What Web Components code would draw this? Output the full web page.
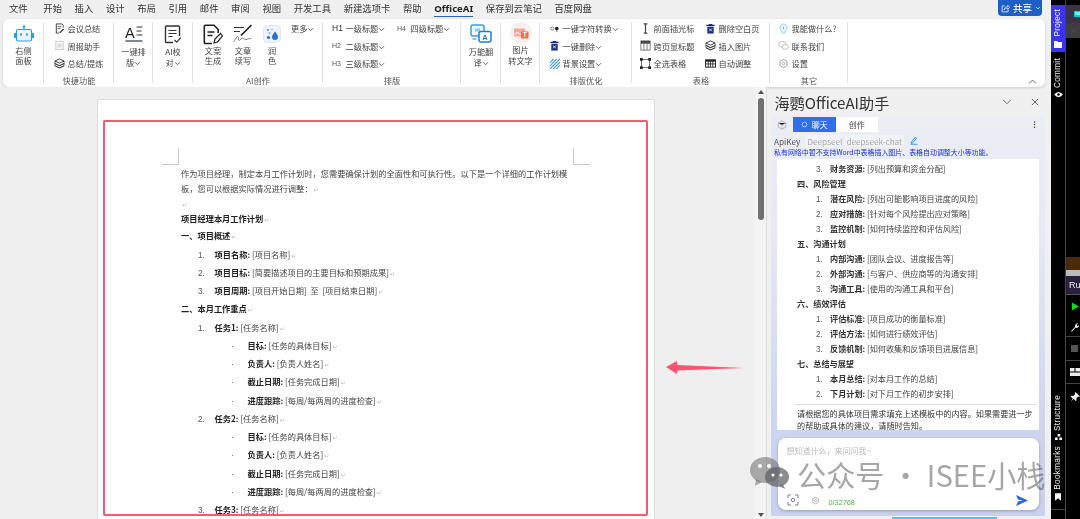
<!DOCTYPE html>
<html lang="zh"><head><meta charset="utf-8"><title>OfficeAI</title>
<style>
html,body{margin:0;padding:0;height:519px;overflow:hidden;background:#f0f0f0}
body{font-family:"Noto Sans CJK SC","Liberation Sans",sans-serif;color:#333}
</style></head><body>
<app-shell>
<menu-bar>
  <menu-item style="margin-right:3px">文件</menu-item><menu-item>开始</menu-item><menu-item>插入</menu-item><menu-item>设计</menu-item><menu-item>布局</menu-item><menu-item>引用</menu-item><menu-item>邮件</menu-item><menu-item>审阅</menu-item><menu-item>视图</menu-item><menu-item>开发工具</menu-item><menu-item>新建选项卡</menu-item><menu-item>帮助</menu-item><menu-item active>OfficeAI</menu-item><menu-item>保存到云笔记</menu-item><menu-item>百度网盘</menu-item>
  <share-btn slot="end">共享</share-btn>
</menu-bar>
<rb-ribbon>
  <rb-group style="width:41px"><rb-big icon="robot" w="22" h="18">右侧<br>面板</rb-big></rb-group>
  <rb-group label="快捷功能" style="width:70px"><rb-rows style="padding-left:10px">
    <rb-small icon="docpen">会议总结</rb-small><rb-small icon="faint">周报助手</rb-small><rb-small icon="layers">总结/提炼</rb-small>
  </rb-rows></rb-group>
  <rb-group style="width:39px"><rb-big icon="aline" w="18" h="18" style="--tm:2px">一键排<br>版<x-icon name="chev" w="7" h="5"></x-icon></rb-big></rb-group>
  <rb-group style="width:40px"><rb-big icon="doccheck" w="18" h="19" style="--tm:2px">AI校<br>对<x-icon name="chev" w="7" h="5"></x-icon></rb-big></rb-group>
  <rb-group label="AI创作" style="width:130px"><rb-cols style="padding-left:5px">
    <rb-big icon="docpenb" w="20" h="21" style="width:30px;flex:none">文案<br>生成</rb-big>
    <rb-big icon="squiggle" w="20" h="20" style="width:30px;flex:none">文章<br>续写</rb-big>
    <rb-big icon="polish" w="18" h="18" style="width:28px;flex:none">润<br>色</rb-big>
    <rb-small style="margin-left:5px">更多<x-icon name="chev" w="7" h="5"></x-icon></rb-small>
  </rb-cols></rb-group>
  <rb-group label="排版" style="width:138px"><rb-cols style="padding-left:9px">
    <rb-rows style="width:65px">
      <rb-small lead="H1" big>一级标题<x-icon name="chev" w="7" h="5"></x-icon></rb-small>
      <rb-small lead="H2">二级标题<x-icon name="chev" w="7" h="5"></x-icon></rb-small>
      <rb-small lead="H3">三级标题<x-icon name="chev" w="7" h="5"></x-icon></rb-small>
    </rb-rows>
    <rb-rows><rb-small lead="H4">四级标题<x-icon name="chev" w="7" h="5"></x-icon></rb-small></rb-rows>
  </rb-cols></rb-group>
  <rb-group style="width:40px"><rb-big icon="translate" w="22" h="20" style="--tm:2px">万能翻<br>译<x-icon name="chev" w="7" h="5"></x-icon></rb-big></rb-group>
  <rb-group style="width:39px"><rb-big icon="imgtext" w="22" h="22" style="--pt:4px;--tm:1px">图片<br>转文字</rb-big></rb-group>
  <rb-group label="排版优化" style="width:92px"><rb-rows style="padding-left:9px">
    <rb-small icon="dots">一键字符转换<x-icon name="chev" w="7" h="5"></x-icon></rb-small>
    <rb-small icon="trash">一键删除<x-icon name="chev" w="7" h="5"></x-icon></rb-small>
    <rb-small icon="stripes">背景设置<x-icon name="chev" w="7" h="5"></x-icon></rb-small>
  </rb-rows></rb-group>
  <rb-group label="表格" style="width:138px"><rb-cols style="padding-left:8px">
    <rb-rows style="width:65px">
      <rb-small icon="ibeam">前面插光标</rb-small><rb-small icon="tablehead">跨页显标题</rb-small><rb-small icon="select">全选表格</rb-small>
    </rb-rows>
    <rb-rows>
      <rb-small icon="trash">删除空白页</rb-small><rb-small icon="layers">插入图片</rb-small><rb-small icon="tabledark">自动调整</rb-small>
    </rb-rows>
  </rb-cols></rb-group>
  <rb-group label="其它" style="width:78px"><rb-rows style="padding-left:8px">
    <rb-small icon="bulb">我能做什么?</rb-small><rb-small icon="wechat">联系我们</rb-small><rb-small icon="gear">设置</rb-small>
  </rb-rows></rb-group>
  <x-icon slot="end" name="chevup" w="9" h="5"></x-icon>
</rb-ribbon>
<work-space>
  <doc-area>
    <doc-line tight nomark>作为项目经理，制定本月工作计划时，您需要确保计划的全面性和可执行性。以下是一个详细的工作计划模</doc-line>
    <doc-line tight>板，您可以根据实际情况进行调整：</doc-line>
    <doc-line tight></doc-line>
    <doc-line tight><b>项目经理本月工作计划</b></doc-line>
    <doc-line><b>一、项目概述</b></doc-line>
    <doc-line level="1" num="1."><b>项目名称:</b> [项目名称]</doc-line>
    <doc-line level="1" num="2."><b>项目目标:</b> [简要描述项目的主要目标和预期成果]</doc-line>
    <doc-line level="1" num="3."><b>项目周期:</b> [项目开始日期]&nbsp; 至&nbsp; [项目结束日期]</doc-line>
    <doc-line><b>二、本月工作重点</b></doc-line>
    <doc-line level="1" num="1."><b>任务1:</b> [任务名称]</doc-line>
    <doc-line level="2" num="·"><b>目标:</b> [任务的具体目标]</doc-line>
    <doc-line level="2" num="·"><b>负责人:</b> [负责人姓名]</doc-line>
    <doc-line level="2" num="·"><b>截止日期:</b> [任务完成日期]</doc-line>
    <doc-line level="2" num="·"><b>进度跟踪:</b> [每周/每两周的进度检查]</doc-line>
    <doc-line level="1" num="2."><b>任务2:</b> [任务名称]</doc-line>
    <doc-line level="2" num="·"><b>目标:</b> [任务的具体目标]</doc-line>
    <doc-line level="2" num="·"><b>负责人:</b> [负责人姓名]</doc-line>
    <doc-line level="2" num="·"><b>截止日期:</b> [任务完成日期]</doc-line>
    <doc-line level="2" num="·"><b>进度跟踪:</b> [每周/每两周的进度检查]</doc-line>
    <doc-line level="1" num="3."><b>任务3:</b> [任务名称]</doc-line>
  </doc-area>
  <doc-scroll></doc-scroll>
  <task-pane>
    <msg-line num="3."><b>财务资源:</b> [列出预算和资金分配]</msg-line>
    <msg-line head>四、风险管理</msg-line>
    <msg-line num="1."><b>潜在风险:</b> [列出可能影响项目进度的风险]</msg-line>
    <msg-line num="2."><b>应对措施:</b> [针对每个风险提出应对策略]</msg-line>
    <msg-line num="3."><b>监控机制:</b> [如何持续监控和评估风险]</msg-line>
    <msg-line head>五、沟通计划</msg-line>
    <msg-line num="1."><b>内部沟通:</b> [团队会议、进度报告等]</msg-line>
    <msg-line num="2."><b>外部沟通:</b> [与客户、供应商等的沟通安排]</msg-line>
    <msg-line num="3."><b>沟通工具:</b> [使用的沟通工具和平台]</msg-line>
    <msg-line head>六、绩效评估</msg-line>
    <msg-line num="1."><b>评估标准:</b> [项目成功的衡量标准]</msg-line>
    <msg-line num="2."><b>评估方法:</b> [如何进行绩效评估]</msg-line>
    <msg-line num="3."><b>反馈机制:</b> [如何收集和反馈项目进展信息]</msg-line>
    <msg-line head>七、总结与展望</msg-line>
    <msg-line num="1."><b>本月总结:</b> [对本月工作的总结]</msg-line>
    <msg-line num="2."><b>下月计划:</b> [对下月工作的初步安排]</msg-line>
    <msg-foot>请根据您的具体项目需求填充上述模板中的内容。如果需要进一步的帮助或具体的建议，请随时告知。</msg-foot>
  </task-pane>
</work-space>
<ide-strip></ide-strip>
<water-mark></water-mark>
</app-shell>
<script>
const ICONS={
robot:['0 0 22 18','<path d="M11 4V1.5" stroke="#2e9be6" stroke-width="1.3"/><circle cx="11" cy="1.5" r="1.2" fill="#2e9be6"/><rect x="3.5" y="4.5" width="15" height="11.5" rx="1.5" fill="#eaf5fd" stroke="#2e9be6" stroke-width="1.2"/><rect x="1" y="8" width="2" height="5" fill="#2e9be6"/><rect x="19" y="8" width="2" height="5" fill="#2e9be6"/><rect x="7" y="8.5" width="2" height="2" fill="#2e9be6"/><rect x="13" y="8.5" width="2" height="2" fill="#2e9be6"/>'],
docpen:['0 0 12 12','<path d="M2.5 11V1h6l1.5 1.5V5M2.5 11h3" fill="none" stroke="#333" stroke-width="1"/><path d="M4 4h4M4 6h3" stroke="#333" stroke-width=".8"/><path d="M6 10l4-4 1 1-4 4H6z" fill="#333"/>'],
faint:['0 0 12 12','<rect x="2" y="1.5" width="8" height="9" fill="#f6f6f6" stroke="#c8c8c8"/><rect x="4" y="4" width="4" height="4" fill="#d8d8d8"/>'],
layers:['0 0 12 12','<path d="M6 1l5 2.3L6 5.6 1 3.3z" fill="none" stroke="#333" stroke-width="1"/><path d="M1 6l5 2.3L11 6" fill="none" stroke="#333" stroke-width="1.1"/><path d="M1 8.4l5 2.4 5-2.4" fill="none" stroke="#333" stroke-width="1.1"/><path d="M1 3.3v5M11 3.3v5" stroke="#333" stroke-width=".8"/>'],
aline:['0 0 18 18','<text x="0" y="12.5" font-family="Liberation Sans" font-size="14.5" fill="#222">A</text><path d="M11.5 2h6M11.5 6h5M11.5 10h6" stroke="#333" stroke-width="1"/><path d="M.5 16h17" stroke="#44546a" stroke-width="1.4"/>'],
doccheck:['0 0 18 19','<path d="M9 17.5H2.5a1 1 0 0 1-1-1V2a1 1 0 0 1 1-1h12a1 1 0 0 1 1 1v9" fill="none" stroke="#333" stroke-width="1.4"/><path d="M4.5 5.5h8M4.5 8.5h8M4.5 11.5h4" stroke="#333" stroke-width="1.1"/><path d="M10.5 15l2.2 2.2 4-4.5" fill="none" stroke="#333" stroke-width="1.2"/>'],
docpenb:['0 0 20 21','<path d="M9 19.5H2.5a1.2 1.2 0 0 1-1.2-1.2V2.5A1.2 1.2 0 0 1 2.5 1.3H11l4.2 4.2V9" fill="none" stroke="#222" stroke-width="1.6"/><path d="M4.5 8h7M4.5 11.5h5" stroke="#222" stroke-width="1.4"/><path d="M11 19l1-4 5.5-5.5 2 2.5L14.5 18z" fill="#fff" stroke="#222" stroke-width="1.2"/>'],
squiggle:['0 0 20 20','<path d="M1 3.5h10M1 7.5h6" stroke="#333" stroke-width="1"/><path d="M18.5 1L8 11.5" stroke="#222" stroke-width="1.7"/><path d="M.5 18c2-2 3-6 4.5-5.5 1.500.5-.5 4 1 4s2.500-3 4-2.500 1 2 3 1.500 3-1 5-1" fill="none" stroke="#777" stroke-width=".9"/>'],
polish:['0 0 18 18','<rect x=".5" y=".5" width="17" height="17" rx="4" fill="#edf3fd" stroke="#dce6f6"/><circle cx="5" cy="5" r="1" fill="#4f86d8"/><circle cx="9" cy="4.500" r=".8" fill="#7fb0ea"/><circle cx="6.500" cy="8" r="1" fill="#7fb0ea"/><path d="M12 6.500c2 2.700 3 4 3 5.500a3 3 0 0 1-6 0c0-1.500 1-2.800 3-5.500z" fill="#2f6fcb"/><circle cx="5.500" cy="12.500" r="1.600" fill="#2f6fcb"/>'],
translate:['0 0 22 20','<path d="M3 1h9a2 2 0 0 1 2 2v7a2 2 0 0 1-2 2H3a2 2 0 0 1-2-2V3a2 2 0 0 1 2-2z" fill="#eaf6fd" stroke="#35a0e6" stroke-width="1.5"/><path d="M5 4.500h5v3H5z" fill="#8cc7ee"/><path d="M11 7.500h8a2 2 0 0 1 2 2V16a2 2 0 0 1-2 2h-8a2 2 0 0 1-2-2V9.500a2 2 0 0 1 2-2z" fill="#fff" stroke="#1f7fd0" stroke-width="1.5"/><text x="12.300" y="15.800" font-family="Liberation Sans" font-size="7.500" font-weight="700" fill="#1f7fd0">A</text><path d="M2.500 15h4" stroke="#35a0e6" stroke-width="1.300"/>'],
imgtext:['0 0 22 22','<circle cx="11" cy="11" r="11" fill="#f6f1ee"/><rect x="4" y="6.500" width="11" height="8" fill="#f7a893"/><path d="M4.500 13l3-3 2.500 2.500 1.500-1 2 1.500" fill="none" stroke="#fff" stroke-width="1"/><rect x="11" y="9.500" width="7.500" height="7" fill="#ee6e4e"/><text x="12.700" y="15.200" font-family="Liberation Sans" font-size="6.500" font-weight="700" fill="#fff">T</text>'],
dots:['0 0 12 12','<circle cx="3.500" cy="6" r="1.700" fill="none" stroke="#555" stroke-width=".8"/><circle cx="8.500" cy="6" r="2" fill="#222"/><path d="M8.500 8v1.500" stroke="#222"/>'],
trash:['0 0 12 12','<path d="M4 1h4v1h2.500v1.300h-9V2H4z" fill="#1c2f80"/><path d="M2.500 4h7v7.500h-7z" fill="#1c2f80"/><path d="M4.500 6l3 3M7.500 6l-3 3" stroke="#fff" stroke-width=".9"/>'],
stripes:['0 0 12 12','<path d="M1 5L5 1M1 8.500L8.500 1M1 12L12 1M4.500 12L12 4.500M8 12l4-4" stroke="#3d9be8" stroke-width="1.200"/>'],
ibeam:['0 0 12 12','<path d="M4 1h4M4 11h4M6 1v10" stroke="#444" stroke-width="1.300"/>'],
tablehead:['0 0 12 12','<rect x="1" y="1" width="10" height="10" fill="#fff" stroke="#555" stroke-width=".8"/><rect x="1" y="1" width="10" height="3" fill="#444"/><path d="M4.300 1v10M7.700 1v10" stroke="#555" stroke-width=".8"/>'],
select:['0 0 12 12','<rect x="1.500" y="1.500" width="9" height="9" fill="none" stroke="#444" stroke-width=".8"/><path d="M0 0h3v3H0zM9 0h3v3H9zM0 9h3v3H0zM9 9h3v3H9z" fill="#222"/>'],
tabledark:['0 0 12 12','<rect x=".5" y="2" width="11" height="8" fill="#fff" stroke="#222"/><path d="M.5 2h11v2H.5z" fill="#222"/><path d="M.5 6.500h11M3.500 2v8M6 2v8M8.500 2v8" stroke="#222" stroke-width=".9"/>'],
bulb:['0 0 12 12','<path d="M6 1a4 4 0 0 1 2.400 7.200L7.500 11h-3L3.600 8.200A4 4 0 0 1 6 1z" fill="#eaf6fd" stroke="#8ccaf0" stroke-width=".9"/><path d="M6 4v3" stroke="#6bb8e8"/>'],
wechat:['0 0 12 12','<ellipse cx="4.700" cy="4.700" rx="4" ry="3.300" fill="#fff" stroke="#aaa" stroke-width=".8"/><ellipse cx="8" cy="7.500" rx="3.300" ry="2.700" fill="#fff" stroke="#aaa" stroke-width=".8"/>'],
gear:['0 0 12 12','<path d="M6 1.500l3.800 2.200v4.600L6 10.500 2.200 8.300V3.700z" fill="none" stroke="#999" stroke-width="1"/><circle cx="6" cy="6" r="1.500" fill="none" stroke="#999" stroke-width=".9"/>'],
chev:['0 0 7 5','<path d="M1 1.200l2.500 2.500L6 1.200" fill="none" stroke="#555" stroke-width=".9"/>'],
chevup:['0 0 9 5','<path d="M1 4.500L4.500 1 8 4.500" fill="none" stroke="#666" stroke-width="1"/>'],
chevw:['0 0 7 5','<path d="M1 1.200l2.500 2.500L6 1.200" fill="none" stroke="#fff" stroke-width=".9"/>'],
sharei:['0 0 12 12','<path d="M5 2.500H1.500v8h8V7" fill="none" stroke="#fff" stroke-width="1"/><path d="M4 8c.5-3 2.500-4.500 5-4.500V1.500L11.500 4.500 9 7V5.500C7 5.500 5.500 6 4 8z" fill="none" stroke="#fff" stroke-width=".9"/>'],
bigchev:['0 0 11 7','<path d="M1 1l4.500 4.500L10 1" fill="none" stroke="#555" stroke-width="1"/>'],
close:['0 0 9 9','<path d="M1 1l7 7M8 1L1 8" stroke="#555" stroke-width="1"/>'],
cube:['0 0 12 12','<path d="M6 1l4.500 2.500v5L6 11 1.500 8.500v-5z" fill="none" stroke="#aaa" stroke-width="1"/><path d="M1.500 3.500L6 6l4.500-2.500M6 6v5" stroke="#aaa" stroke-width=".8"/>'],
ring:['0 0 9 9','<circle cx="4.500" cy="4.500" r="3" fill="none" stroke="#fff" stroke-width=".8"/>'],
vdots:['0 0 4 10','<circle cx="2" cy="1.500" r="1" fill="#333"/><circle cx="2" cy="5" r="1" fill="#333"/><circle cx="2" cy="8.500" r="1" fill="#333"/>'],
pen:['0 0 10 12','<path d="M1.500 8l5.500-6.500 1.500 1.300L3 9.300 1.200 9.800z" fill="none" stroke="#2f86ea" stroke-width="1.200"/><path d="M.5 11h9" stroke="#2f86ea" stroke-width="1.200"/>'],
scan:['0 0 12 12','<path d="M1 4V1h3M8 1h3v3M11 8v3H8M4 11H1V8" fill="none" stroke="#777" stroke-width=".9"/><circle cx="6" cy="6" r="1.700" fill="none" stroke="#777" stroke-width=".9"/>'],
send:['0 0 12 11','<path d="M0 0l12 5.500L0 11l2-4.500 5-1-5-1z" fill="#2563eb"/>'],
folder:['0 0 8 8','<path d="M0 1h3l1 1h4v6H0z" fill="#fff"/>'],
eye:['0 0 10 8','<path d="M0 4q5-6 10 0q-5 6-10 0z" fill="#fff"/><circle cx="5" cy="4" r="1.500" fill="#000"/>'],
struct:['0 0 8 7','<path d="M3 0h3v3H3zM0 4h3v3H0zM5 4h3v3H5z" fill="#fff"/>'],
bookmark:['0 0 7 9','<path d="M0 0h7v9L3.500 6 0 9z" fill="#fff"/>'],
play:['0 0 9 9','<path d="M1 0l8 4.500L1 9z" fill="#16d916"/>'],
wrench:['0 0 12 12','<path d="M1 11l5-5c-.5-2 1-4.500 4-4.500L8 3.500l1 1.500 2-1.500c0 3-2.500 4-4.500 3.500l-4 4.500z" fill="#eee"/>'],
stop:['0 0 8 8','<rect width="8" height="8" fill="#555"/>'],
layout:['0 0 10 8','<path d="M0 0h4.500v3.500H0zM5.500 0H10v3.500H5.500zM0 4.500h10V8H0z" fill="#eee"/>'],
pin:['0 0 11 11','<path d="M6 0l5 5-1 .5-1-.5-2 2 .3 2-1 1-2.300-2.500L1 10.500l2-3.300L.7 5l1-1 2 .3 2-2-.3-1z" fill="#eee"/>'],
cyan:['0 0 7 6','<rect width="7" height="6" fill="#12c6d8"/><rect x="1" y="1" width="5" height="3" fill="#6ff"/>']
};
function def(name,css,html,init){
  customElements.define(name,class extends HTMLElement{
    constructor(){super();this.attachShadow({mode:'open'}).innerHTML='<style>'+css+'</style>'+html;}
    connectedCallback(){if(init)init.call(this,this.shadowRoot);}
  });
}
function svg(n,w,h){const i=ICONS[n];return `<svg xmlns="http://www.w3.org/2000/svg" viewBox="${i[0]}" width="${w}" height="${h}" style="display:block">${i[1]}</svg>`;}
def('x-icon',':host{display:inline-block;vertical-align:middle;flex:none}','',function(r){
  r.innerHTML+=svg(this.getAttribute('name'),this.getAttribute('w')||12,this.getAttribute('h')||12);
});
def('app-shell',':host{display:grid;grid-template-columns:1051px 29px;grid-template-rows:19px 68px 432px;width:1080px;height:519px;position:relative;overflow:hidden;background:#f0f0f0;filter:blur(.3px)}::slotted(ide-strip){grid-column:2;grid-row:1/4}::slotted(menu-bar){grid-column:1;grid-row:1}::slotted(rb-ribbon){grid-column:1;grid-row:2}::slotted(work-space){grid-column:1;grid-row:3}','<slot></slot>');
def('menu-bar',':host{display:flex;align-items:flex-start;padding-left:9px;gap:12.6px;font-size:9.35px;color:#333}.end{margin-left:auto;margin-right:9px;display:flex}','<slot></slot><div class="end"><slot name="end"></slot></div>');
def('menu-item',':host{display:block;height:17px;line-height:17px;white-space:nowrap}:host([active]){font-weight:700;color:#222;border-bottom:1.5px solid #2b5fb8;height:15.5px;font-family:"Noto Sans","Noto Sans CJK SC",sans-serif;font-size:9.6px}','<slot></slot>');
def('share-btn',':host{display:flex;align-items:center;gap:3px;width:44px;height:16px;box-sizing:border-box;padding-left:3px;background:#1c5fc6;color:#fff;border-radius:0 0 4px 4px;font-size:9.5px;font-weight:500}','<x-icon name="sharei" w="9" h="9"></x-icon><slot></slot><x-icon name="chevw" w="6" h="4"></x-icon>');
def('rb-ribbon',':host{display:flex;margin:0 6px 0 3px;height:68px;background:#fff;border-radius:6px;box-shadow:0 1px 3px rgba(0,0,0,.16);font-size:8.2px;color:#444}.end{margin-left:auto;padding:55px 8px 0 0}','<slot></slot><div class="end"><slot name="end"></slot></div>');
def('rb-group',':host{display:flex;flex-direction:column;height:68px;box-sizing:border-box;flex:none;padding-top:.25px;background:linear-gradient(#e2e2e2,#e2e2e2) right 3px/1px 61px no-repeat}.c{flex:1;display:flex;min-height:0}.l{height:13px;line-height:12px;text-align:center;color:#555;white-space:nowrap}','<div class="c"><slot></slot></div><div class="l"></div>',function(r){r.querySelector('.l').textContent=this.getAttribute('label')||'';});
def('rb-rows',':host{display:flex;flex-direction:column;flex:none}','<slot></slot>');
def('rb-cols',':host{display:flex;flex:1;align-items:flex-start}','<slot></slot>');
def('rb-big',':host{display:flex;flex-direction:column;align-items:center;flex:auto;padding-top:var(--pt,5px);box-sizing:border-box}.i{height:20px;display:flex;align-items:center}.t{margin-top:var(--tm,.5px);line-height:10.6px;text-align:center;white-space:nowrap;color:#444}','<div class="i"></div><div class="t"><slot></slot></div>',function(r){r.querySelector('.i').innerHTML=svg(this.getAttribute('icon'),this.getAttribute('w'),this.getAttribute('h'));});
def('rb-small',':host{display:flex;align-items:center;height:17.5px;white-space:nowrap;color:#444;gap:2.5px}.i{display:contents}.h{font-family:"Liberation Sans",sans-serif;font-size:7px;color:#555;width:11px}:host([big]) .h{font-size:8.5px;color:#333}','<span class="i"></span><span><slot></slot></span>',function(r){
  const ic=this.getAttribute('icon'),l=this.getAttribute('lead'),e=r.querySelector('.i');
  if(ic)e.innerHTML=svg(ic,11,11);
  if(l)e.innerHTML='<span class="h">'+l+'</span>';
});
def('work-space',':host{display:flex;height:432px;overflow:hidden;position:relative}','<slot></slot>');
def('doc-area',':host{display:block;width:755px;flex:none;box-sizing:border-box;padding:12px 0 0 97px;background:#efefef;position:relative;overflow:hidden}.page{position:relative;width:558px;height:440px;box-sizing:border-box;background:#fff;border:1px solid #ddd;padding:65.5px 0 0 83px;font-size:8.23px;color:#444;overflow:hidden}.m{position:absolute;width:16px;height:16px;top:48px;border-bottom:1px solid #c9c9c9}.ml{left:64px;border-right:1px solid #c9c9c9}.mr{left:475px;border-left:1px solid #c9c9c9}.red{position:absolute;left:5px;top:20px;width:545px;height:396px;box-sizing:border-box;border:2px solid #f9596f;border-radius:2px}.arrow{position:absolute;left:666px;top:273px}','<div class="page"><div class="m ml"></div><div class="m mr"></div><slot></slot><div class="red"></div></div><svg class="arrow" width="78" height="14" viewBox="0 0 78 14"><path d="M0 7L11 1v4L78 8 11 10.500V14z" fill="#ff5470"/></svg>');
def('doc-line',':host{display:flex;align-items:baseline;height:18.25px;line-height:18.25px;white-space:nowrap;box-sizing:border-box}:host([tight]){height:15.2px;line-height:15.2px}:host([level="1"]){padding-left:17px}:host([level="2"]){padding-left:50px}.n{width:16.5px;flex:none;color:#555;font-family:"Liberation Sans",sans-serif}.r{color:#bbb;font:6px "DejaVu Sans",sans-serif;margin-left:1px}:host([nomark]) .r{display:none}::slotted(b){color:#222}','<span class="n"></span><span><slot></slot><span class="r">↵</span></span>',function(r){const n=this.getAttribute('num'),e=r.querySelector('.n');if(n)e.textContent=n;else e.remove();});
def('doc-scroll',':host{display:flex;flex-direction:column;align-items:center;width:11px;flex:none;background:#f3f3f3;border-right:1px solid #dcdcdc;box-sizing:content-box}.up,.dn{width:0;height:0;border:3.5px solid transparent}.up{border-bottom:4px solid #555;border-top:0;margin-top:3px}.dn{border-top:4px solid #555;border-bottom:0;margin-top:auto;margin-bottom:2px}.th{width:6px;height:122px;margin-top:4px;border-radius:3px;background:#707070}','<div class="up"></div><div class="th"></div><div class="dn"></div>');
def('task-pane',`:host{display:flex;flex-direction:column;flex:1;min-width:0;position:relative}
.hd{height:28px;flex:none;display:flex;align-items:center;padding:2px 12px 0 7.500px;box-sizing:border-box;font-size:15.100px;color:#333}
.hd .t{flex:1;white-space:nowrap}.hd x-icon+x-icon{margin-left:19px}
.p{flex:1;display:flex;flex-direction:column;margin:0 6px 3px 4px;background:linear-gradient(#eceef4 0,#e6e9f3 30%,#cdd4ee 80%,#c9d1ec 100%);min-height:0;padding:2px 6px 6px}
.tabs{height:15px;display:flex;align-items:center;margin:0 -3px;font-size:8px}
.tabs .c{margin-left:3px;margin-right:6px}
.tb{height:15px;width:42.500px;display:flex;align-items:center;justify-content:center;gap:4px;background:#fff;color:#444}
.tb.on{background:#2f6fe8;color:#fff}
.tabs .v{margin-left:auto;margin-right:6px}
.api{height:14px;margin:2px -3px 0;display:flex;align-items:center;font-size:8.200px;color:#555}
.chip{height:12px;line-height:12px;background:#f2f3f7;color:#a9a9a9;border-radius:2px;padding:0 2px;margin-left:2px;white-space:nowrap;overflow:hidden}
.note{height:9px;line-height:8px;margin:0 -3px 2.500px;font-size:6.950px;color:#1a2ee8;white-space:nowrap}
.card{height:271px;flex:none;background:#fff;box-sizing:border-box;padding:1.500px 0 0 20px;font-size:8.130px;color:#444;overflow:hidden}
.in{margin-top:8px;height:72px;flex:none;background:#fff;border-radius:8px;box-shadow:0 1px 3px rgba(60,60,90,.35);box-sizing:border-box;padding:7px 9px 0;display:flex;flex-direction:column;font-size:8px;color:#bbb;margin-left:.500px}
.b{margin-top:auto;height:20px;display:flex;align-items:center;gap:12px}
.n{color:#4cb84c;font-size:7.300px;margin:5px 0 0 -3px;font-family:"Liberation Sans",sans-serif}
.b .s{margin-left:auto;margin-right:2px}
.cy{position:absolute;left:125px;bottom:0;width:105px;height:2px;background:#3fc9ff}`,
`<div class="hd"><span class="t">海鹦OfficeAI助手</span><x-icon name="bigchev" w="10" h="6"></x-icon><x-icon name="close" w="8" h="8"></x-icon></div>
<div class="p">
<div class="tabs"><x-icon class="c" name="cube" w="10" h="10"></x-icon><div class="tb on"><x-icon name="ring" w="7" h="7"></x-icon>聊天</div><div class="tb">创作</div><x-icon class="v" name="vdots" w="3" h="9"></x-icon></div>
<div class="api"><span>ApiKey</span><span class="chip" style="width:33px;margin-left:5px">Deepseel</span><span class="chip" style="width:56px">deepseek-chat</span><x-icon name="pen" w="8" h="9" style="margin-left:6px"></x-icon></div>
<div class="note">私有网络中暂不支持Word中表格插入图片、表格自动调整大小等功能。</div>
<div class="card"><slot></slot></div>
<div class="in"><span>想知道什么，来问问我~</span><div class="b"><x-icon name="scan" w="12" h="12"></x-icon><x-icon name="gear" w="9" h="9"></x-icon><span class="n">0/32768</span><x-icon class="s" name="send" w="12" h="11"></x-icon></div></div>
</div><div class="cy"></div>`);
def('msg-line',':host{display:flex;align-items:baseline;height:15.05px;line-height:15.05px;white-space:nowrap;padding-left:19px}:host([head]){padding-left:0;font-weight:700;color:#333}.n{width:14px;flex:none;color:#555;font-family:"Liberation Sans",sans-serif}::slotted(b){color:#333}','<span class="n"></span><span><slot></slot></span>',function(r){const n=this.getAttribute('num'),e=r.querySelector('.n');if(n)e.textContent=n;else e.remove();});
def('msg-foot',':host{display:block;margin:2.500px 0 0 -2px;padding:3px 0 0 2px;border-top:1px solid #ddd;width:240px;line-height:12px;color:#333}','<slot></slot>');
def('water-mark',':host{position:absolute;left:750px;top:456px;display:flex;align-items:flex-start;gap:8px;font-size:29.200px;line-height:30px;color:rgba(85,85,85,.52);white-space:nowrap;pointer-events:none}span{margin-top:3px}','<svg width="39" height="34" viewBox="0 0 39 34"><ellipse cx="15" cy="14" rx="15" ry="13" fill="rgba(105,105,105,.55)"/><path d="M6 23l-1 7 7-4z" fill="rgba(105,105,105,.55)"/><ellipse cx="27" cy="21" rx="12" ry="10" fill="rgba(95,95,100,.72)"/><path d="M33 28l2 5-6-3z" fill="rgba(95,95,100,.72)"/><circle cx="10" cy="10" r="2" fill="#fff"/><circle cx="19" cy="10" r="2" fill="#fff"/><circle cx="23" cy="19" r="1.600" fill="#fff"/><circle cx="31" cy="19" r="1.600" fill="#fff"/></svg><span>公众号 · ISEE小栈</span>');
def('side-tab',':host{display:flex;flex-direction:column;align-items:center;gap:3px;flex:none;color:#eee;font:8.2px "Liberation Sans","DejaVu Sans",sans-serif}:host([on]){background:#3a34ef;color:#fff;height:47px;padding-top:4px;box-sizing:border-box}.t{writing-mode:vertical-rl;transform:rotate(180deg);line-height:14px;letter-spacing:.3px}','<span class="t"><slot></slot></span><span class="i"></span>',function(r){r.querySelector('.i').innerHTML=svg(this.getAttribute('icon'),this.getAttribute('w'),this.getAttribute('h'));});
def('ide-strip',`:host{display:flex;background:#000;height:519px;overflow:hidden}
.a{width:14px;flex:none;display:flex;flex-direction:column;padding-top:5px;box-sizing:border-box;border-right:0}
.a .sp{flex:1}.a .g{height:6px}
.a side-tab.bm{margin-bottom:8px;margin-top:6px}
.bt{height:9px;border-top:1px solid #444}
.z{flex:1;border-left:1px solid #444;display:flex;flex-direction:column;padding-top:5px;box-sizing:border-box;align-items:stretch;min-width:0;overflow:hidden}
.r{display:flex;align-items:center;justify-content:center;flex:none}
.ru{height:19px;background:#2b1f3e;color:#eee;font:9px "Liberation Sans",sans-serif;justify-content:flex-start;padding-left:3px;border-bottom:1px solid #555;box-sizing:border-box}
.ic{height:23.500px;border-bottom:1px solid #444;box-sizing:border-box;padding-left:3px}
.ic2{box-sizing:border-box;padding-left:3px}`,
`<div class="a"><side-tab on icon="folder" w="8" h="8">Project</side-tab><div class="g"></div><side-tab icon="eye" w="9" h="7">Commit</side-tab><div class="sp"></div><side-tab icon="struct" w="7" h="6">Structure</side-tab><side-tab class="bm" icon="bookmark" w="6" h="8">Bookmarks</side-tab><div class="bt"></div></div>
<div class="z"><div class="r" style="height:18px;background:#3c3344;justify-content:flex-start;padding-left:8px"><x-icon name="cyan" w="7" h="6"></x-icon></div><div class="r" style="height:15px;background:#3e3e3e"><x-icon name="chev" w="7" h="5"></x-icon></div><div style="height:219px;flex:none"></div><div style="height:13px;flex:none;background:#4a2a0c"></div><div style="height:6px;flex:none;background:#bcbcbc"></div><div class="r ru">Ru</div><div class="r ic2" style="height:22px"><x-icon name="play" w="8" h="9"></x-icon></div><div class="r ic" style="height:20px"><x-icon name="wrench" w="10" h="10"></x-icon></div><div class="r ic"><x-icon name="stop" w="7" h="7"></x-icon></div><div class="r ic"><x-icon name="layout" w="10" h="8"></x-icon></div><div class="r ic2" style="height:26px"><x-icon name="pin" w="10" h="10"></x-icon></div><div style="flex:1"></div></div>`);
</script>
</body></html>
